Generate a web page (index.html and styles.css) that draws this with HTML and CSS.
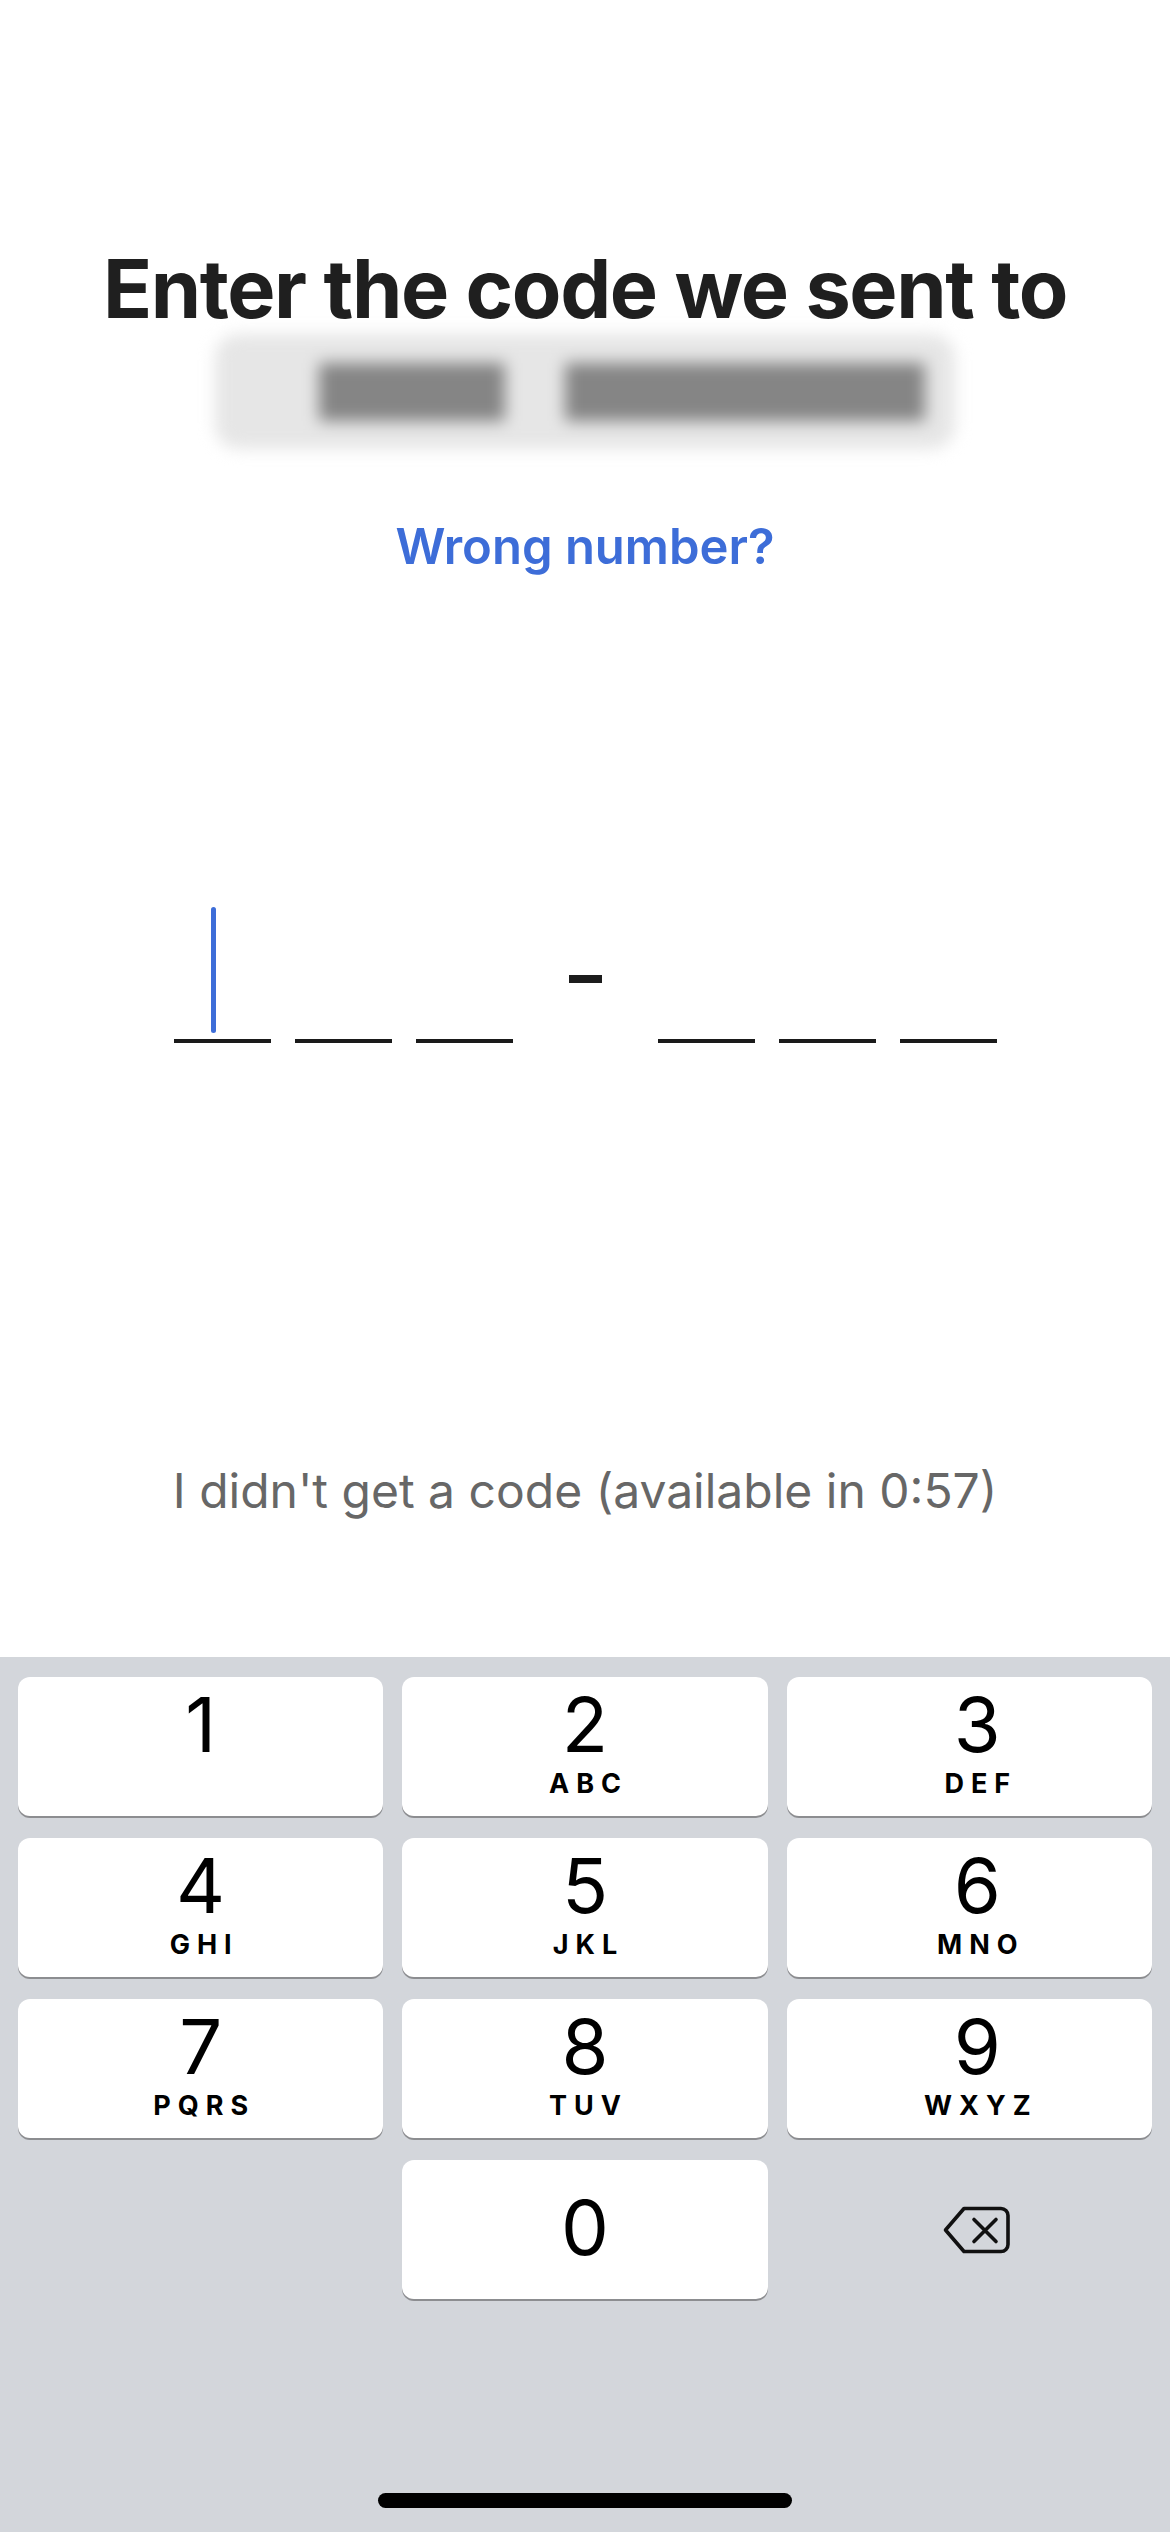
FILE: index.html
```html
<!DOCTYPE html>
<html lang="en">
<head>
  <meta charset="UTF-8">
  <meta name="viewport" content="width=device-width, initial-scale=1.0">
  <title>Enter code</title>
  <link rel="stylesheet" href="styles.css">
</head>
<body>
  <main class="screen">
    <h1 class="title">Enter the code we sent to</h1>
    <div class="masked">
      <span class="blob blob-a"></span>
      <span class="blob blob-b"></span>
    </div>
    <a class="wrong" href="#">Wrong number?</a>

    <div class="code">
      <div class="group">
        <span class="slot active"><span class="cursor"></span></span>
        <span class="slot"></span>
        <span class="slot"></span>
      </div>
      <span class="dash"></span>
      <div class="group">
        <span class="slot"></span>
        <span class="slot"></span>
        <span class="slot"></span>
      </div>
    </div>

    <p class="resend">I didn't get a code (available in 0:57)</p>
  </main>

  <section class="keyboard">
    <div class="keys">
      <button class="key"><span class="num">1</span></button>
      <button class="key"><span class="num">2</span><span class="sub">ABC</span></button>
      <button class="key right"><span class="num">3</span><span class="sub">DEF</span></button>
      <button class="key"><span class="num">4</span><span class="sub">GHI</span></button>
      <button class="key"><span class="num">5</span><span class="sub">JKL</span></button>
      <button class="key right"><span class="num">6</span><span class="sub">MNO</span></button>
      <button class="key"><span class="num">7</span><span class="sub">PQRS</span></button>
      <button class="key"><span class="num">8</span><span class="sub">TUV</span></button>
      <button class="key right"><span class="num">9</span><span class="sub">WXYZ</span></button>
      <span class="blank"></span>
      <button class="key zero"><span class="num">0</span></button>
      <button class="back" aria-label="Delete">
        <svg width="67" height="48" viewBox="0 0 67 48">
          <path d="M21 2.5H58a7 7 0 0 1 7 7V38.5a7 7 0 0 1-7 7H21L2.5 24Z" fill="none" stroke="#111" stroke-width="3.6" stroke-linejoin="round"/>
          <path d="M31 13.5L53 35.5M53 13.5L31 35.5" stroke="#111" stroke-width="3.6" stroke-linecap="round"/>
        </svg>
      </button>
    </div>
    <div class="home"></div>
  </section>
</body>
</html>
```

FILE: styles.css
```css
* {
  box-sizing: border-box;
}
body {
  margin: 0;
  width: 1170px;
  height: 2532px;
  font-family: Inter, "Noto Sans", sans-serif;
  background-color: #fff;
  display: flex;
  flex-direction: column;
}
.screen {
  height: 1657px;
  display: flex;
  flex-direction: column;
  align-items: center;
  padding-top: 240px;
}
.title {
  margin: 0;
  font-size: 81px;
  font-weight: 700;
  line-height: 98px;
  letter-spacing: -1.4px;
  color: #1f1f1f;
}
.masked {
  margin-top: -4px;
  width: 740px;
  height: 115px;
  display: flex;
  align-items: center;
  gap: 60px;
  padding-left: 104px;
  background-color: #e6e6e6;
  border-radius: 24px;
  filter: blur(8px);
}
.blob {
  height: 58px;
  background-color: #858585;
}
.blob-a {
  width: 186px;
}
.blob-b {
  width: 360px;
}
.wrong {
  margin-top: 68px;
  font-size: 49px;
  font-weight: 600;
  line-height: 60px;
  color: #3d6dd8;
  text-decoration: none;
}
.code {
  margin-top: 330px;
  display: flex;
  align-items: flex-end;
  gap: 56px;
}
.group {
  display: flex;
  gap: 24px;
}
.slot {
  width: 97px;
  height: 136px;
  border-bottom: 4px solid #1a1a1a;
  display: flex;
  padding-left: 37px;
  padding-bottom: 7px;
}
.cursor {
  width: 5px;
  height: 126px;
  border-radius: 3px;
  background-color: #3d6dd8;
}
.dash {
  width: 33px;
  height: 8px;
  margin-bottom: 60px;
  background-color: #1c1c1c;
}
.resend {
  margin: 418px 0 0;
  font-size: 48px;
  line-height: 60px;
  color: #676767;
}
.keyboard {
  flex: 1;
  background-color: #d3d6db;
  padding: 20px 18px 0;
  display: flex;
  flex-direction: column;
}
.keys {
  display: grid;
  grid-template-columns: repeat(3, 1fr);
  column-gap: 19px;
  row-gap: 22px;
}
.key {
  height: 139px;
  border: none;
  border-radius: 12px;
  background-color: #fff;
  box-shadow: 0 2px 0 #8c8d90;
  font-family: Inter, "Noto Sans", sans-serif;
  color: #000;
  display: flex;
  flex-direction: column;
  align-items: center;
  padding: 7px 0 0;
}
.key.right {
  padding-left: 16px;
}
.num {
  font-size: 76px;
  font-weight: 400;
  line-height: 80px;
}
.sub {
  margin-top: 4px;
  font-size: 27px;
  font-weight: 700;
  line-height: 32px;
  letter-spacing: 7px;
  padding-left: 7px;
}
.zero {
  justify-content: center;
  padding: 0 0 6px;
}
.back {
  border: none;
  background: none;
  display: flex;
  align-items: center;
  justify-content: center;
  padding: 0 0 0 14px;
}
.home {
  margin: auto auto 24px;
  width: 414px;
  height: 15px;
  border-radius: 8px;
  background-color: #000;
}
```
